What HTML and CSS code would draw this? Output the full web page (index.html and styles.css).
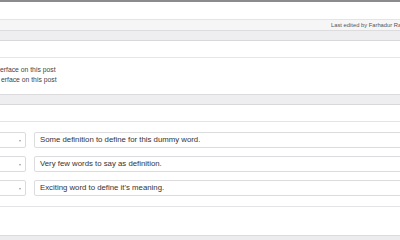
FILE: index.html
```html
<!DOCTYPE html>
<html lang="en">
<head>
    <meta charset="UTF-8">
    <meta name="viewport" content="width=device-width, initial-scale=1.0">
    <title>Edit Post</title>
    <link rel="stylesheet" href="styles.css">
</head>
<body>
    <div class="top-bar"></div>
    <div class="editor-area"></div>

    <div class="status-bar">
        <span class="last-edited">Last edited by Farhadur Ra</span>
    </div>
    <div class="box-head"></div>

    <div class="box-gap"></div>

    <section class="options-box">
        <p class="option">erface on this post</p>
        <p class="option option-second">erface on this post</p>
    </section>
    <div class="box-head box-head-mid"></div>

    <section class="fields-box">
        <div class="fields-top"></div>
        <div class="field-list">
            <div class="field-row">
                <div class="select-box"><span class="caret"></span></div>
                <div class="text-box">Some definition to define for this dummy word.</div>
            </div>
            <div class="field-row">
                <div class="select-box"><span class="caret"></span></div>
                <div class="text-box">Very few words to say as definition.</div>
            </div>
            <div class="field-row">
                <div class="select-box"><span class="caret"></span></div>
                <div class="text-box">Exciting word to define it's meaning.</div>
            </div>
        </div>
        <div class="fields-bottom"></div>
    </section>
    <div class="footer-band"></div>
</body>
</html>
```

FILE: styles.css
```css
html, body {
    margin: 0;
    padding: 0;
}

body {
    width: 400px;
    height: 240px;
    overflow: hidden;
    background: #ffffff;
    font-family: "Liberation Sans", Arial, sans-serif;
    color: #3c3c3c;
}

.top-bar {
    height: 2px;
    background-color: #8b8b8d;
}

.editor-area {
    height: 17px;
    background-color: #ffffff;
}

/* status line under the editor */
.status-bar {
    height: 10px;
    border-top: 1px solid #e4e4e6;
    background-color: #f6f6f7;
    padding-left: 331px;
    display: flex;
    align-items: center;
    white-space: nowrap;
    overflow: hidden;
}

.last-edited {
    font-size: 5.8px;
    color: #50575e;
}

.box-head {
    height: 9px;
    border-top: 1px solid #dcdcde;
    border-bottom: 1px solid #d8d8da;
    background-color: #eeeef0;
}

.box-gap {
    height: 16px;
}

.options-box {
    border-top: 1px solid #e6e6e8;
    height: 37px;
    padding-top: 7px;
    box-sizing: border-box;
    overflow: hidden;
}

.option {
    margin: 0;
    font-size: 6.8px;
    line-height: 10px;
    white-space: nowrap;
    color: #444;
}

.option-second {
    margin-left: 1px;
}

.box-head-mid {
    height: 9px;
}

.fields-box {
    height: 130px;
}

.fields-top {
    height: 16px;
    border-bottom: 1px solid #e4e4e6;
}

.field-list {
    padding-top: 10px;
    display: flex;
    flex-direction: column;
    gap: 8px;
}

.field-row {
    display: flex;
    align-items: stretch;
    gap: 8px;
    margin-left: -40px;
    margin-right: -40px;
}

.select-box {
    width: 66px;
    height: 16px;
    box-sizing: border-box;
    border: 1px solid #dcdcde;
    border-radius: 2px;
    position: relative;
    flex-shrink: 0;
}

.caret {
    position: absolute;
    right: 4px;
    top: 7px;
    border-left: 1.5px solid transparent;
    border-right: 1.5px solid transparent;
    border-top: 2px solid #9a9a9c;
}

.text-box {
    flex: 1;
    height: 16px;
    box-sizing: border-box;
    border: 1px solid #dcdcde;
    border-radius: 2px;
    padding-left: 5px;
    font-size: 7.8px;
    line-height: 14px;
    color: #333;
    white-space: nowrap;
}

.fields-bottom {
    height: 10px;
    border-bottom: 1px solid #e4e4e6;
}

.footer-band {
    height: 5px;
    border-top: 1px solid #dadadc;
    background-color: #ececee;
}
```
